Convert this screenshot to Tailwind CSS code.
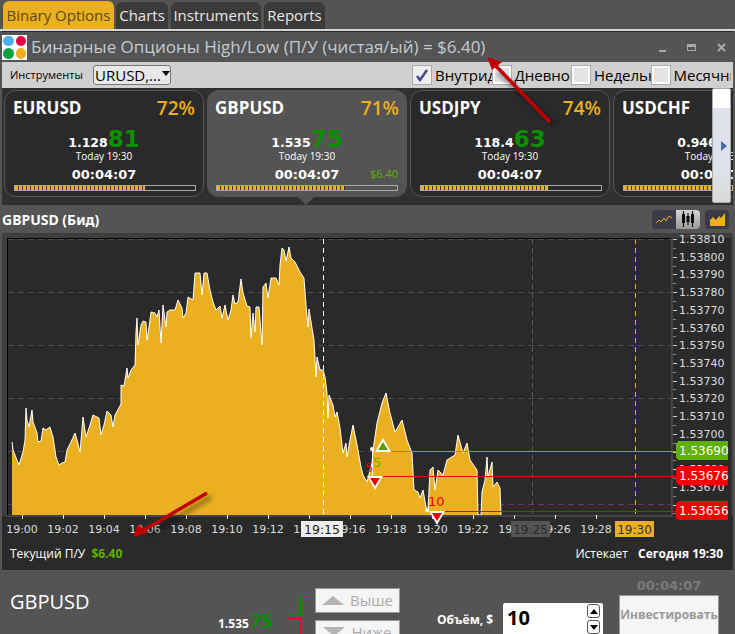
<!DOCTYPE html>
<html lang="en">
<head>
  <meta charset="UTF-8" />
  <title>Binary Options</title>
  <script src="https://cdn.jsdelivr.net/npm/@tailwindcss/browser@4"></script>
</head>
<body class="relative w-[735px] h-[634px] overflow-hidden bg-[#545454] font-['Open_Sans',sans-serif] text-white">

  <!-- tabs -->
  <nav class="flex h-[29px] items-end gap-[2px] pl-[3px] text-[15px]">
    <a class="flex h-[28px] w-[111px] items-center justify-center rounded-t-md bg-[#eab020] text-[#5b4a1e]">Binary Options</a>
    <a class="flex h-[27px] w-[52px] items-center justify-center rounded-t-md bg-[#3a3a3a] text-[#e8e8e8]">Charts</a>
    <a class="ml-[1px] flex h-[27px] w-[90px] items-center justify-center rounded-t-md bg-[#3a3a3a] text-[#e8e8e8]">Instruments</a>
    <a class="ml-[1px] flex h-[27px] w-[61px] items-center justify-center rounded-t-md bg-[#3a3a3a] text-[#e8e8e8]">Reports</a>
  </nav>
  <div class="h-[2px] bg-[#d4d4d4]"></div>

  <!-- window -->
  <div class="mx-[2px] w-[731px] border-t border-[#2a2a2a]">
    <header class="flex h-[30px] items-center pl-0 pr-[7px]">
      <div class="grid h-[25px] w-[25px] grid-cols-2 gap-[2px] bg-white p-[1px]">
        <span class="rounded-full bg-[#4ab0f0]"></span>
        <span class="rounded-full bg-[#e8003c]"></span>
        <span class="rounded-full bg-[#0aa040]"></span>
        <span class="rounded-full bg-[#eab020]"></span>
      </div>
      <h1 class="ml-[4px] whitespace-nowrap text-[17px] text-[#c3cbd2]">Бинарные Опционы High/Low (П/У (чистая/ый) = $6.40)</h1>
      <div class="ml-auto flex items-center gap-[21px]">
        <span class="mt-[7px] h-[2px] w-[7px] bg-[#aaa]"></span>
        <span class="h-[7px] w-[9px] border border-t-[3px] border-[#aaa]"></span>
        <svg class="h-[9px] w-[9px] stroke-[#aaa]" viewBox="0 0 9 9"><path d="M1 1l7 7M8 1l-7 7" stroke-width="2" fill="none" /></svg>
      </div>
    </header>

    <!-- toolbar -->
    <div class="flex h-[26px] items-center bg-[#d0d0d0] pl-[8px] text-black">
      <span class="w-[83px] text-[11px]">Инструменты</span>
      <div class="relative h-[20px] w-[78px] overflow-hidden rounded-[3px] border border-[#777] bg-[#e8e8e8] pl-[1px] text-[15px] leading-[18px]">
        URUSD,...
        <span class="absolute right-0 top-[5px] h-0 w-0 border-x-[4px] border-t-[5px] border-x-transparent border-t-black"></span>
      </div>
      <div class="ml-[241px] flex text-[15px]">
        <label class="flex w-[79.5px] items-center overflow-hidden">
          <span class="flex h-[20px] w-[20px] shrink-0 items-center justify-center border border-[#aaa] bg-[#eee]">
            <svg class="h-[14px] w-[14px]" viewBox="0 0 14 14"><path d="M2 8l3 4 7-10" stroke="#46468c" stroke-width="2.5" fill="none" /></svg>
          </span>
          <span class="ml-[3px] whitespace-nowrap">Внутридневной</span>
        </label>
        <label class="flex w-[79.5px] items-center overflow-hidden">
          <span class="h-[20px] w-[20px] shrink-0 border border-[#aaa] bg-[#e4e4e4] shadow-[inset_0_0_0_2px_#fff]"></span>
          <span class="ml-[3px] whitespace-nowrap">Дневной</span>
        </label>
        <label class="flex w-[79.5px] items-center overflow-hidden">
          <span class="h-[20px] w-[20px] shrink-0 border border-[#aaa] bg-[#e4e4e4] shadow-[inset_0_0_0_2px_#fff]"></span>
          <span class="ml-[3px] whitespace-nowrap">Недельный</span>
        </label>
        <label class="flex w-[80px] items-center overflow-hidden">
          <span class="h-[20px] w-[20px] shrink-0 border border-[#aaa] bg-[#e4e4e4] shadow-[inset_0_0_0_2px_#fff]"></span>
          <span class="ml-[3px] whitespace-nowrap">Месячный</span>
        </label>
      </div>
    </div>

    <!-- instruments -->
    <div class="relative flex h-[117px] gap-[3px] overflow-hidden bg-[#303030] pl-[2px] pt-[2px]">
      <div class="h-[107px] w-[200px] shrink-0 rounded-[12px] border border-[#555] bg-[#2a2a2a] px-[8px]">
        <div class="mt-[5px] flex h-[24px] items-center justify-between"><b class="text-[17px] font-bold">EURUSD</b><span class="text-[19px] font-semibold text-[#eab020]">72%</span></div>
        <div class="mt-[2px] flex h-[27px] items-baseline justify-center font-['DejaVu_Sans',sans-serif] font-bold"><span class="text-[12.5px]">1.128</span><span class="text-[23px] text-[#0a9000]">81</span></div>
        <div class="h-[14px] text-center text-[10px] leading-[14px]">Today 19:30</div>
        <div class="mt-[3px] h-[17px] text-center font-['DejaVu_Sans',sans-serif] text-[13px] font-bold leading-[17px]">00:04:07</div>
        <div class="mt-[2px] ml-[1px] h-[6px] w-[182px] border border-[#aaa] bg-[#2a2a2a]"><div class="h-full w-[72%] bg-[repeating-linear-gradient(90deg,#eab020_0_3px,#3a3420_3px_4px)]"></div></div>
      </div>
      <div class="relative h-[107px] w-[200px] shrink-0 rounded-[12px] bg-[#545454] px-[8px] pt-[1px]">
        <div class="mt-[5px] flex h-[24px] items-center justify-between"><b class="text-[17px] font-bold">GBPUSD</b><span class="text-[19px] font-semibold text-[#eab020]">71%</span></div>
        <div class="mt-[2px] flex h-[27px] items-baseline justify-center font-['DejaVu_Sans',sans-serif] font-bold"><span class="text-[12.5px]">1.535</span><span class="text-[23px] text-[#0a9000]">75</span></div>
        <div class="h-[14px] text-center text-[10px] leading-[14px]">Today 19:30</div>
        <div class="mt-[3px] h-[17px] text-center font-['DejaVu_Sans',sans-serif] text-[13px] font-bold leading-[17px]">00:04:07</div>
        <div class="mt-[2px] ml-[1px] h-[6px] w-[182px] border border-[#aaa] bg-[#545454]"><div class="h-full w-[71%] bg-[repeating-linear-gradient(90deg,#eab020_0_3px,#3a3420_3px_4px)]"></div></div>
        <span class="absolute right-[9px] top-[76px] text-[11px] text-[#5fb000]">$6.40</span>
      </div>
      <div class="h-[107px] w-[200px] shrink-0 rounded-[12px] border border-[#555] bg-[#2a2a2a] px-[8px]">
        <div class="mt-[5px] flex h-[24px] items-center justify-between"><b class="text-[17px] font-bold">USDJPY</b><span class="text-[19px] font-semibold text-[#eab020]">74%</span></div>
        <div class="mt-[2px] flex h-[27px] items-baseline justify-center font-['DejaVu_Sans',sans-serif] font-bold"><span class="text-[12.5px]">118.4</span><span class="text-[23px] text-[#0a9000]">63</span></div>
        <div class="h-[14px] text-center text-[10px] leading-[14px]">Today 19:30</div>
        <div class="mt-[3px] h-[17px] text-center font-['DejaVu_Sans',sans-serif] text-[13px] font-bold leading-[17px]">00:04:07</div>
        <div class="mt-[2px] ml-[1px] h-[6px] w-[182px] border border-[#aaa] bg-[#2a2a2a]"><div class="h-full w-[71%] bg-[repeating-linear-gradient(90deg,#eab020_0_3px,#3a3420_3px_4px)]"></div></div>
      </div>
      <div class="h-[107px] w-[200px] shrink-0 rounded-[12px] border border-[#555] bg-[#2a2a2a] px-[8px]">
        <div class="mt-[5px] flex h-[24px] items-center justify-between"><b class="text-[17px] font-bold">USDCHF</b><span class="text-[19px] font-semibold text-[#eab020]">70%</span></div>
        <div class="mt-[2px] flex h-[27px] items-baseline justify-center font-['DejaVu_Sans',sans-serif] font-bold"><span class="text-[12.5px]">0.946</span><span class="text-[23px] text-[#0a9000]">12</span></div>
        <div class="h-[14px] text-center text-[10px] leading-[14px]">Today 19:30</div>
        <div class="mt-[3px] h-[17px] text-center font-['DejaVu_Sans',sans-serif] text-[13px] font-bold leading-[17px]">00:04:07</div>
        <div class="mt-[2px] ml-[1px] h-[6px] w-[182px] border border-[#aaa] bg-[#2a2a2a]"><div class="h-full w-[70%] bg-[repeating-linear-gradient(90deg,#eab020_0_3px,#3a3420_3px_4px)]"></div></div>
      </div>
      <!-- scroll button -->
      <button class="absolute right-[2px] top-0 flex h-[115px] w-[19px] items-center justify-end rounded-[2px] border border-[#aaa] bg-[linear-gradient(#fff_0_17%,#dfe2ea_17%_70%,#d8dad6_100%)] pr-[3px]">
        <span class="h-0 w-0 border-y-[5px] border-l-[6px] border-y-transparent border-l-[#4a6aa8]"></span>
      </button>
      <!-- pointer of the selected card -->
      <span class="absolute bottom-0 left-[295px] h-0 w-0 border-x-[9px] border-t-[9px] border-x-transparent border-t-[#545454]"></span>
    </div>

    <!-- chart title -->
    <div class="flex h-[28px] items-center pr-[4px]">
      <h2 class="font-['Noto_Sans',sans-serif] text-[14px] font-bold">GBPUSD (Бид)</h2>
      <div class="ml-auto flex h-[19px] w-[48px] overflow-hidden rounded-[4px] bg-[#3b3b48]">
        <span class="flex w-[24px] items-center justify-center">
          <svg class="h-[10px] w-[16px]" viewBox="0 0 16 10"><path d="M0 9l3-3 2 2 3-4 2 3 3-5 3 2" stroke="#eab020" fill="none" /></svg>
        </span>
        <span class="flex w-[24px] items-center justify-center bg-[linear-gradient(#d4d4d4,#999)]">
          <svg class="h-[16px] w-[16px]" viewBox="0 0 16 16"><path d="M3.5 0v16M12.5 0v16M8 2v12" stroke="#000" /><path d="M2 3h3v9H2zM6.5 5h3v6h-3zM11 3h3v9h-3z" fill="#000" /></svg>
        </span>
      </div>
      <div class="ml-[5px] flex h-[19px] w-[24px] items-center justify-center rounded-[4px] bg-[#3b3b48]">
        <svg class="h-[13px] w-[15px]" viewBox="0 0 15 13"><path d="M0 7l3-3 3 3 3-4 2 2 4-5v13H0z" fill="#eab020" /></svg>
      </div>
    </div>

    <!-- chart -->
    <div class="bg-[#2a2a2a]">
      <svg id="chart" class="block h-[305px] w-[731px] font-['DejaVu_Sans',sans-serif]" viewBox="2 233 731 305" shape-rendering="crispEdges"></svg>
      <div class="flex h-[32px] items-center justify-between px-[8px] text-[12px]">
        <p>Текущий П/У <b class="ml-[3px] text-[#5fb000]">$6.40</b></p>
        <p class="pr-[2px]">Истекает <b class="ml-[7px]">Сегодня 19:30</b></p>
      </div>
    </div>
  </div>

  <!-- order panel -->
  <div class="flex h-[64px] overflow-hidden">
    <div class="w-[213px] pl-[10px] pt-[18px]">
      <div class="text-[20px] leading-[28px]">GBPUSD</div>
      <div class="ml-[53px] mt-[12px] text-[22px] font-semibold leading-[30px] text-[#eab020]">71%</div>
    </div>
    <div class="flex h-[30px] w-[72px] items-baseline pl-[5px] pt-[36px] font-bold"><span class="text-[12px]">1.535</span><span class="ml-[1px] text-[20px] text-[#0a9000]">75</span></div>
    <svg class="h-[64px] w-[30px] shrink-0" viewBox="0 0 30 64" shape-rendering="crispEdges"><path d="M3 45.5h12.5v-20h13" stroke="#0a9000" fill="none" /><path d="M3 48.5h12.5V64" stroke="#f00000" fill="none" /></svg>
    <div class="flex w-[85px] shrink-0 flex-col gap-[7px] pt-[18px] text-[15px] text-[#aaa]">
      <button class="flex h-[25px] items-center justify-center gap-[6px] border border-[#999] bg-[#f5f5f5]"><span class="h-0 w-0 border-x-[11px] border-b-[9px] border-x-transparent border-b-[#b4b4b4]"></span>Выше</button>
      <button class="flex h-[25px] items-center justify-center gap-[6px] border border-[#999] bg-[#f5f5f5]"><span class="h-0 w-0 border-x-[11px] border-t-[9px] border-x-transparent border-t-[#b4b4b4]"></span>Ниже</button>
    </div>
    <div class="ml-[37px] w-[66px] shrink-0 pt-[41px] text-[12px] font-bold leading-[18px]">Объём, $</div>
    <div class="relative mt-[33px] h-[40px] w-[100px] shrink-0 rounded-[2px] bg-white pl-[4px] text-[20px] font-bold leading-[30px] text-black">
      10
      <span class="absolute right-[3px] top-[1px] flex h-[14px] w-[13px] items-center justify-center rounded-[3px] border border-[#555]"><span class="h-0 w-0 border-x-[4px] border-b-[5px] border-x-transparent border-b-black"></span></span>
      <span class="absolute right-[3px] top-[17px] flex h-[14px] w-[13px] items-center justify-center rounded-[3px] border border-[#555]"><span class="h-0 w-0 border-x-[4px] border-t-[5px] border-x-transparent border-t-black"></span></span>
    </div>
    <div class="ml-[16px] w-[100px] shrink-0 pt-[7px] text-center">
      <div class="font-['DejaVu_Sans',sans-serif] text-[13px] font-bold leading-[18px] text-[#7a7a7a]">00:04:07</div>
      <button class="h-[42px] w-full border border-[#999] bg-[#f5f5f5] pb-[3px] text-[12px] font-bold text-[#999]">Инвестировать</button>
    </div>
  </div>

  <!-- annotation arrows -->
  <svg class="absolute left-0 top-0 h-[634px] w-[735px]" viewBox="0 0 735 634">
    <defs><filter id="soft"><feGaussianBlur stdDeviation="2" /></filter></defs>
    <g filter="url(#soft)" stroke="#000" stroke-opacity=".35" stroke-width="5" fill="none"><path d="M555 125L498 72M211 497L150 534" /></g>
    <path d="M550 122L494 64" stroke="#c00000" stroke-width="3.5" />
    <path d="M487 57l15 5-10 8z" fill="#c00000" />
    <path d="M207 493L144 530" stroke="#c00000" stroke-width="3.5" />
    <path d="M133 537l5-13 10 9z" fill="#c00000" />
  </svg>

  <script>
    // outline of the price area, traced from left to right
    const area = [[12,442],[13,450],[17,460],[19,465],[23,452],[25,440],[26,408],[27,420],[29,427],[32,410],[33,422],[37,433],[38,442],[41,441],[43,428],[46,430],[50,427],[53,437],[56,457],[59,465],[62,463],[65,462],[67,450],[71,442],[75,433],[77,440],[80,452],[83,417],[86,437],[90,425],[93,415],[99,418],[101,435],[104,425],[107,411],[111,415],[113,427],[115,415],[121,404],[121,385],[124,386],[126,374],[127,368],[128,378],[131,370],[135,365],[136,332],[137,318],[138,345],[141,325],[143,321],[146,322],[147,340],[149,327],[151,312],[155,313],[157,317],[159,310],[161,343],[163,305],[166,327],[167,312],[170,310],[175,310],[178,300],[182,308],[183,318],[186,313],[188,297],[193,300],[195,273],[200,273],[202,295],[204,273],[207,273],[210,290],[213,302],[216,310],[220,306],[222,318],[225,305],[228,320],[231,310],[233,295],[235,304],[238,302],[241,279],[243,293],[247,306],[250,307],[251,338],[253,313],[255,332],[256,307],[259,307],[262,345],[263,287],[266,283],[268,298],[271,278],[276,278],[279,285],[280,265],[282,248],[284,250],[286,261],[289,247],[291,258],[295,262],[300,272],[304,278],[306,305],[308,327],[309,309],[312,328],[314,340],[316,377],[317,357],[320,370],[323,370],[325,377],[327,393],[328,418],[329,395],[331,400],[333,405],[335,417],[337,412],[340,428],[343,453],[346,443],[347,457],[350,440],[353,425],[357,445],[361,467],[363,475],[367,482],[372,463],[373,450],[376,430],[377,423],[382,403],[386,393],[390,413],[395,432],[402,420],[407,440],[412,453],[414,490],[418,492],[420,498],[423,490],[426,507],[428,510],[430,470],[433,467],[435,490],[438,470],[443,475],[447,460],[455,455],[458,435],[463,453],[467,443],[470,460],[477,470],[478,515],[481,515],[482,492],[485,480],[487,457],[488,477],[492,462],[493,487],[497,482],[500,488],[501,515]];

    const svg = [];
    const line = (x1, y1, x2, y2, color, dash) =>
      svg.push(`<line x1="${x1}" y1="${y1}" x2="${x2}" y2="${y2}" stroke="${color}"${dash ? ` stroke-dasharray="${dash}"` : ''} />`);
    const label = (x, y, text, color, size, anchor) =>
      svg.push(`<text x="${x}" y="${y}" fill="${color}" font-size="${size}" text-anchor="${anchor || 'start'}" shape-rendering="auto">${text}</text>`);
    const tag = (y, color, text) => {
      svg.push(`<polygon points="678,${y} 728,${y} 728,${y + 19} 678,${y + 19} 676,${y + 17} 676,${y + 2}" fill="${color}" />`);
      label(679, y + 14, text, '#fff', 12);
    };
    const marker = (x, y, up, color) => {
      const p = up ? [[x - 8, y + 14], [x + 8, y + 14], [x, y]] : [[x - 8, y], [x + 8, y], [x, y + 14]];
      const q = up ? [[x - 5, y + 12], [x + 5, y + 12], [x, y + 4]] : [[x - 5, y + 2], [x + 5, y + 2], [x, y + 10]];
      svg.push(`<polygon points="${p.join(' ')}" fill="#fff" shape-rendering="auto" />`);
      svg.push(`<polygon points="${q.join(' ')}" fill="${color}" shape-rendering="auto" />`);
    };

    // frame
    svg.push('<rect x="2" y="233" width="731" height="5" fill="#3e3e3e" />');
    svg.push('<rect x="2" y="233" width="5" height="283" fill="#3e3e3e" />');
    svg.push('<rect x="731" y="233" width="2" height="283" fill="#3e3e3e" />');
    line(7, 238.5, 671, 238.5, '#000');
    line(7.5, 238, 7.5, 515, '#000');

    // grid
    for (let y = 239; y <= 504; y += 53) line(8, y + .5, 671, y + .5, '#4a4a58', '6 4');
    line(532.5, 239, 532.5, 515, '#5a5a5a', '5 4');
    line(635.5, 239, 635.5, 515, '#eab020', '5 4');

    // area
    const outline = area.map(p => p.join(',')).join(' ');
    svg.push(`<polygon points="12,515 ${outline} 501,515" fill="#eab020" />`);
    svg.push(`<polyline points="${outline}" fill="none" stroke="#fff" shape-rendering="auto" />`);
    line(323.5, 239, 323.5, 515, '#fff', '5 4');

    // axes
    svg.push('<rect x="7" y="515" width="666" height="2" fill="#444" />');
    svg.push('<rect x="671" y="238" width="2" height="279" fill="#444" />');
    for (let i = 0; i < 32; i++) line(673, 239.5 + i * 8.85, 676, 239.5 + i * 8.85, '#888');
    for (let i = 0; i < 16; i++) {
      const y = 239 + i * 17.72;
      line(673, Math.round(y) + .5, 677, Math.round(y) + .5, '#ccc');
      label(679, y + 4, (1.5381 - i * .0001).toFixed(5), '#ddd', 11);
    }
    for (let i = 0; i < 15; i++) {
      const x = 22 + i * 41, t = '19:' + String(i * 2).padStart(2, '0');
      line(x + .5, 515, x + .5, 519, '#eee');
      label(x, 533, t, '#ddd', 11, 'middle');
    }

    // time badges
    svg.push('<rect x="301" y="521" width="42" height="16" fill="#eee" />');
    label(322, 534, '19:15', '#222', 12.5, 'middle');
    svg.push('<rect x="511" y="521" width="39" height="16" fill="#555" />');
    label(530.5, 534, '19:25', '#2a2a2a', 12, 'middle');
    svg.push('<rect x="615" y="521" width="39" height="16" fill="#eab020" />');
    label(634.5, 534, '19:30', '#333', 12, 'middle');

    // open positions
    line(383, 451.5, 676, 451.5, '#6fb000');
    line(375, 476.5, 676, 476.5, '#f00000');
    line(437, 511.5, 676, 511.5, '#f00000');
    line(372.5, 451, 372.5, 476, '#fff');
    svg.push('<circle cx="372" cy="449" r="2" fill="#fff" shape-rendering="auto" /><circle cx="427" cy="510" r="2" fill="#fff" shape-rendering="auto" />');
    label(373, 467, '5', '#6fb000', 13);
    label(365, 472, '5', '#f00000', 13);
    label(428, 506, '10', '#f00000', 13);
    marker(383, 438, true, '#5a9e00');
    marker(375, 476, false, '#f00000');
    marker(437, 511, false, '#f00000');

    tag(441, '#5fb000', '1.53690');
    tag(466, '#f00000', '1.53676');
    tag(501, '#f00000', '1.53656');

    document.getElementById('chart').innerHTML = svg.join('');
  </script>
</body>
</html>
